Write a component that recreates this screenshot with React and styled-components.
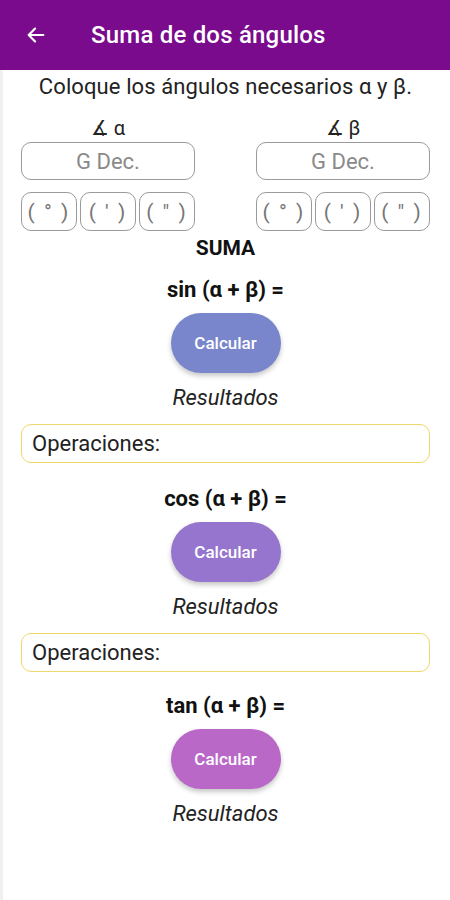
import React from 'react';
import styled, { createGlobalStyle } from 'styled-components';

const GlobalStyle = createGlobalStyle`
  html, body {
    margin: 0;
    padding: 0;
    background: #ffffff;
    font-family: Roboto, "Noto Sans", "Liberation Sans", sans-serif;
  }
  * { box-sizing: border-box; }
`;

const Screen = styled.div`
  width: 450px;
  min-height: 900px;
  background: #fff;
  border-left: 3px solid #f0f0f0;
  display: flex;
  flex-direction: column;
`;

const AppBar = styled.header`
  height: 70px;
  background: #790b8c;
  display: flex;
  align-items: center;
  padding-left: 24px;
  gap: 43px;
  color: #fff;
  margin-left: -3px;
`;

const BackButton = styled.button`
  background: none;
  border: 0;
  padding: 0;
  width: 24px;
  height: 24px;
  display: flex;
  align-items: center;
  justify-content: center;
  color: #fff;
`;

const Title = styled.h1`
  margin: 0;
  font-size: 24px;
  font-weight: 500;
  letter-spacing: 0.2px;
`;

const Body = styled.main`
  display: flex;
  flex-direction: column;
  align-items: center;
  padding: 5px 20px 0 18px;
`;

const Instruction = styled.p`
  margin: 0;
  font-size: 22px;
  line-height: 24px;
  color: #222;
  letter-spacing: 0.1px;
`;

const AngleGrid = styled.div`
  width: 100%;
  display: grid;
  grid-template-columns: 174px 174px;
  justify-content: space-between;
  margin-top: 17px;
`;

const AngleColumn = styled.div`
  display: flex;
  flex-direction: column;
  align-items: stretch;
`;

const AngleLabel = styled.div`
  text-align: center;
  font-size: 20px;
  line-height: 24px;
  color: #222;
  margin-bottom: 2px;
`;

const DecimalInput = styled.input`
  height: 38px;
  border: 1.5px solid #9a9a9a;
  border-radius: 10px;
  text-align: center;
  font-family: inherit;
  font-size: 22px;
  color: #333;
  background: #fff;
  outline: none;
  &::placeholder { color: #8a8a8a; }
`;

const UnitRow = styled.div`
  display: grid;
  grid-template-columns: repeat(3, 1fr);
  gap: 3px;
  margin-top: 12px;
`;

const UnitButton = styled.button`
  height: 39px;
  border: 1.5px solid #9a9a9a;
  border-radius: 10px;
  background: #fff;
  color: #777;
  font-family: inherit;
  font-size: 21px;
  padding: 0;
  letter-spacing: 2px;
`;

const SectionHeading = styled.h2`
  margin: 7px 0 0;
  font-size: 21px;
  line-height: 20px;
  font-weight: 700;
  color: #111;
`;

const Formula = styled.h3`
  margin: ${(p) => p.$top}px 0 0;
  font-size: 22px;
  line-height: 24px;
  font-weight: 700;
  color: #111;
`;

const CalcButton = styled.button`
  margin-top: 11px;
  width: 110px;
  height: 60px;
  border: 0;
  border-radius: 30px;
  background: ${(p) => p.$color};
  color: #fff;
  font-family: inherit;
  font-size: 17px;
  font-weight: 500;
  box-shadow: 0 3px 5px rgba(0, 0, 0, 0.22);
`;

const Results = styled.p`
  margin: 13px 0 0;
  font-size: 22px;
  line-height: 24px;
  font-style: italic;
  color: #222;
`;

const OpsBox = styled.div`
  align-self: stretch;
  margin-top: 14px;
  height: 39px;
  border: 1.5px solid #f0d868;
  border-radius: 10px;
  display: flex;
  align-items: center;
  padding-left: 10px;
  font-size: 22px;
  color: #222;
`;

const ArrowIcon = () => (
  <svg width="22" height="22" viewBox="0 0 24 24" fill="none">
    <path d="M20 12H4M11 5l-7 7 7 7" stroke="#fff" strokeWidth="2.4" strokeLinecap="round" strokeLinejoin="round" />
  </svg>
);

const angles = [
  { label: '∡ α' },
  { label: '∡ β' },
];

const units = ['( ° )', "( ' )", '( " )'];

const formulas = [
  { name: 'sin', color: '#7986cb', ops: true, top: 20 },
  { name: 'cos', color: '#9575cd', ops: true, top: 24 },
  { name: 'tan', color: '#ba68c8', ops: false, top: 22 },
];

export default function App() {
  return (
    <>
      <GlobalStyle />
      <Screen>
        <AppBar>
          <BackButton aria-label="Volver">
            <ArrowIcon />
          </BackButton>
          <Title>Suma de dos ángulos</Title>
        </AppBar>
        <Body>
          <Instruction>Coloque los ángulos necesarios α y β.</Instruction>
          <AngleGrid>
            {angles.map((a) => (
              <AngleColumn key={a.label}>
                <AngleLabel>{a.label}</AngleLabel>
                <DecimalInput placeholder="G Dec." />
                <UnitRow>
                  {units.map((u) => (
                    <UnitButton key={u}>{u}</UnitButton>
                  ))}
                </UnitRow>
              </AngleColumn>
            ))}
          </AngleGrid>
          <SectionHeading>SUMA</SectionHeading>
          {formulas.map((f) => (
            <React.Fragment key={f.name}>
              <Formula $top={f.top}>{f.name} (α + β) =</Formula>
              <CalcButton $color={f.color}>Calcular</CalcButton>
              <Results>Resultados</Results>
              {f.ops && <OpsBox>Operaciones:</OpsBox>}
            </React.Fragment>
          ))}
        </Body>
      </Screen>
    </>
  );
}
